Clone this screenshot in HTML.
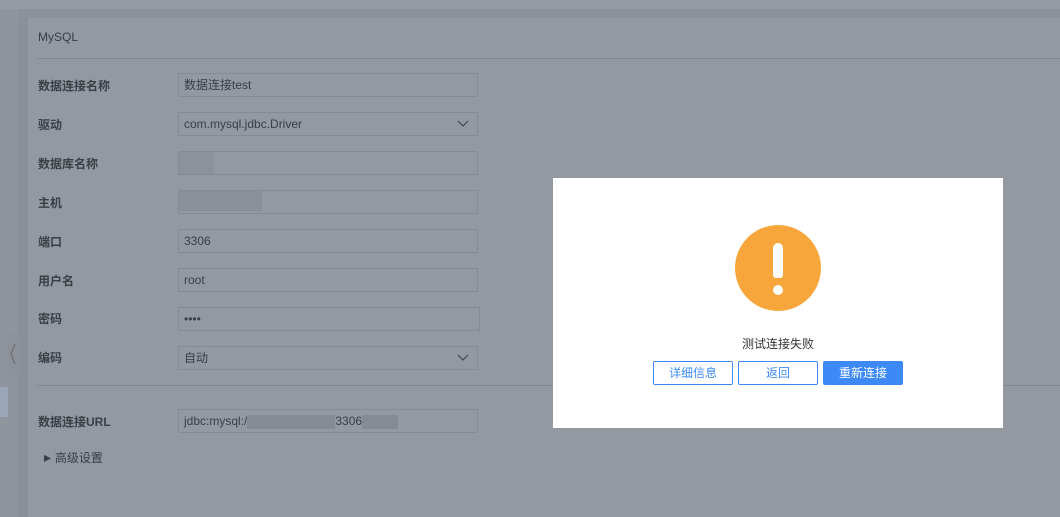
<!DOCTYPE html><html><head><meta charset="utf-8"><style>
body{margin:0;width:1060px;height:517px;overflow:hidden;background:#8f949d;font-family:"Liberation Sans","Noto Sans CJK SC",sans-serif;font-size:12px;color:#33373e;position:relative}
.a{position:absolute}
.lbl{position:absolute;left:38px;font-weight:bold;color:#3a3e45}
.in{position:absolute;left:178px;border:1px solid #858a93;line-height:22px;padding-left:5px;box-sizing:border-box;width:300px;height:24px;color:#3a3e45}
.blur{position:absolute;background:#858a93}
.btn{position:absolute;top:361px;width:80px;height:24px;box-sizing:border-box;border:1px solid #3d8af7;color:#3d8af7;text-align:center;line-height:22px;font-size:12px;border-radius:2px;background:#fff}
.chev{position:absolute;right:8px;top:7px}
</style></head><body>
<div class="a" style="left:0;top:0;width:1060px;height:9px;background:#969ba4"></div>
<div class="a" style="left:18px;top:9px;width:10px;height:508px;background:#8a8f98"></div>
<div class="a" style="left:28px;top:18px;width:1032px;height:499px;background:#9398a1"></div>
<div class="a" style="left:18px;top:9px;width:1042px;height:9px;background:#8c919a"></div>
<div class="a" style="left:8px;top:332px;width:10px;height:44px;background:#8c919a"><svg width="10" height="44"><path d="M7 12 L3 22 L7 32" stroke="#666" fill="none"/></svg></div>
<div class="a" style="left:0;top:387px;width:8px;height:30px;background:#9aa5b8"></div>
<div class="a" style="left:38px;top:30px;color:#3a3e45">MySQL</div>
<div class="a" style="left:38px;top:58px;width:1022px;height:1px;background:#80858e"></div>
<div class="lbl" style="top:77px">数据连接名称</div><div class="in" style="top:73px">数据连接test</div>
<div class="lbl" style="top:116px">驱动</div><div class="in" style="top:112px">com.mysql.jdbc.Driver<svg class="chev" width="12" height="8"><path d="M1 1 L6 6 L11 1" stroke="#3a3e45" fill="none"/></svg></div>
<div class="lbl" style="top:155px">数据库名称</div><div class="in" style="top:151px"></div>
<div class="blur" style="left:178px;top:152px;width:36px;height:22px;opacity:.5"></div>
<div class="lbl" style="top:194px">主机</div><div class="in" style="top:190px"></div>
<div class="blur" style="left:178px;top:191px;width:84px;height:20px;opacity:.6"></div>
<div class="lbl" style="top:233px">端口</div><div class="in" style="top:229px">3306</div>
<div class="lbl" style="top:272px">用户名</div><div class="in" style="top:268px">root</div>
<div class="lbl" style="top:310px">密码</div><div class="in" style="top:307px;width:302px">••••</div>
<div class="lbl" style="top:349px">编码</div><div class="in" style="top:346px">自动<svg class="chev" width="12" height="8"><path d="M1 1 L6 6 L11 1" stroke="#3a3e45" fill="none"/></svg></div>
<div class="a" style="left:38px;top:385px;width:1022px;height:1px;background:#80858e"></div>
<div class="lbl" style="top:413px">数据连接URL</div><div class="in" style="top:409px">jdbc:mysql:/<span style="display:inline-block;width:88px;height:14px;background:#858a93;vertical-align:middle"></span>3306<span style="display:inline-block;width:36px;height:14px;background:#858a93;vertical-align:middle"></span></div>
<div class="a" style="left:44px;top:449px;color:#3a3e45;font-size:14px">▸ <span style="font-size:12px">高级设置</span></div>
<div class="a" style="left:553px;top:178px;width:450px;height:250px;background:#fff"></div>
<div class="a" style="left:735px;top:225px;width:86px;height:86px;border-radius:50%;background:#f7a63b"></div>
<div class="a" style="left:773px;top:243px;width:10px;height:35px;background:#fff;border-radius:5px 5px 3px 3px"></div>
<div class="a" style="left:773px;top:285px;width:10px;height:10px;background:#fff;border-radius:50%"></div>
<div class="a" style="left:553px;top:335px;width:450px;text-align:center;color:#333">测试连接失败</div>
<div class="btn" style="left:653px">详细信息</div>
<div class="btn" style="left:738px">返回</div>
<div class="btn" style="left:823px;background:#3d8af7;color:#fff">重新连接</div>
</body></html>
